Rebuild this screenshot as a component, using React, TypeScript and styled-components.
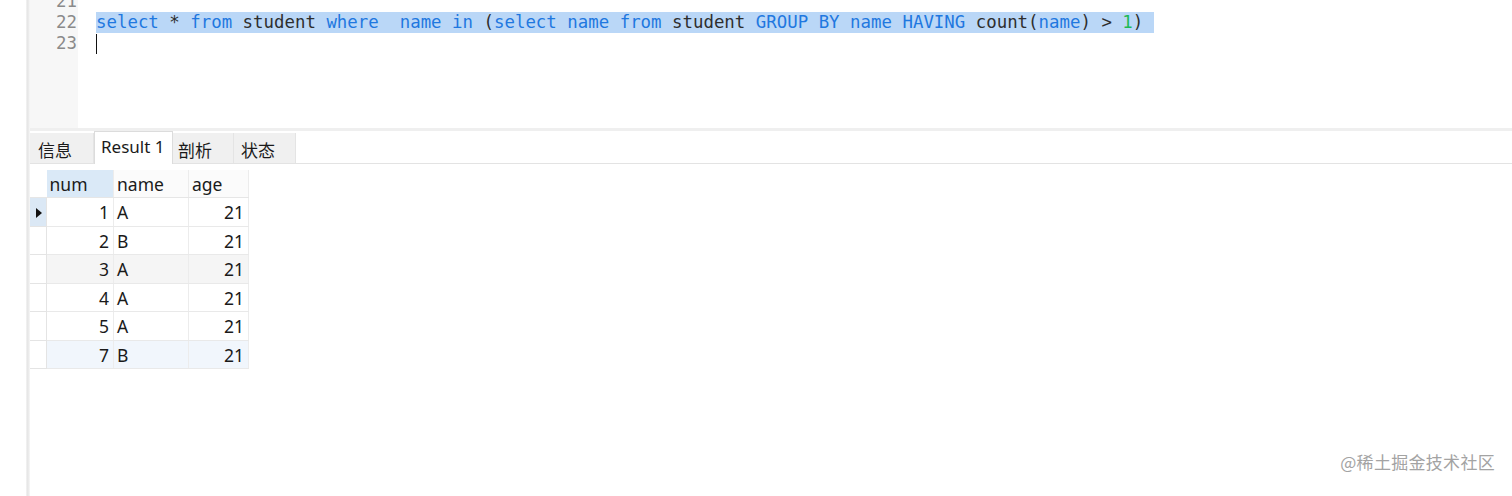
import React from "react";
import styled, { createGlobalStyle } from "styled-components";

const Global = createGlobalStyle`
  html, body { margin: 0; padding: 0; background: #ffffff; }
  body { width: 1512px; height: 496px; overflow: hidden; font-family: "Noto Sans", "Noto Sans CJK SC", sans-serif; }
`;

const Page = styled.div`
  display: flex;
  width: 1512px;
  height: 496px;
  background: #fff;
  position: relative;
`;

const LeftStrip = styled.div`
  width: 26px;
  flex: none;
  background: #fff;
`;

const Divider = styled.div`
  width: 4px;
  flex: none;
  background: linear-gradient(to right, #f4f4f4, #e6e6e6 40%, #ededed 70%, #f8f8f8);
`;

const Main = styled.div`
  flex: 1;
  display: flex;
  flex-direction: column;
  min-width: 0;
`;

const Editor = styled.div`
  height: 128px;
  display: flex;
  overflow: hidden;
  flex: none;
`;

const Gutter = styled.div`
  width: 48px;
  background: #f7f7f7;
  flex: none;
  display: flex;
  flex-direction: column;
  align-items: flex-end;
  padding-right: 1px;
  box-sizing: border-box;
  margin-top: -9px;
`;

const Mono = `
  font-family: "DejaVu Sans Mono", "Liberation Mono", monospace;
  font-size: 17.4px;
  line-height: 21px;
  height: 21px;
  white-space: pre;
`;

const LineNo = styled.div`
  ${Mono};
  color: #8a8a8a;
`;

const Code = styled.div`
  flex: 1;
  padding-left: 18px;
  display: flex;
  flex-direction: column;
  margin-top: -9px;
`;

const Line = styled.div`
  ${Mono};
  color: #2e2e2e;
  display: flex;
  position: relative;
`;

const Sel = styled.span`
  background: #bad7f7;
`;

const Kw = styled.span`
  color: #1f78e0;
`;

const Num = styled.span`
  color: #1db954;
`;

const Caret = styled.span`
  display: inline-block;
  width: 1px;
  height: 20px;
  background: #111;
  margin-top: 1px;
`;

const Sep = styled.div`
  height: 3px;
  background: #efefef;
  flex: none;
`;

const TabBar = styled.div`
  height: 33px;
  display: flex;
  align-items: flex-end;
  border-bottom: 1px solid #e3e3e3;
  flex: none;
  box-sizing: border-box;
`;

const Tab = styled.div<{ $w: number; $active?: boolean; $pl: number }>`
  width: ${(p) => p.$w}px;
  height: ${(p) => (p.$active ? 33 : 30)}px;
  box-sizing: border-box;
  padding-left: ${(p) => p.$pl}px;
  display: flex;
  align-items: center;
  font-family: "Noto Sans", "Noto Sans CJK SC", sans-serif;
  font-size: 17px;
  color: #1a1a1a;
  background: ${(p) => (p.$active ? "#ffffff" : "#f0f0f0")};
  border-right: 1px solid ${(p) => (p.$active ? "#dcdcdc" : "#e4e4e4")};
  border-left: ${(p) => (p.$active ? "1px solid #dcdcdc" : "none")};
  border-top: ${(p) => (p.$active ? "1px solid #dcdcdc" : "none")};
  margin-bottom: ${(p) => (p.$active ? "-1px" : "0")};
  padding-bottom: ${(p) => (p.$active ? "4px" : "0")};
  padding-top: ${(p) => (p.$active ? "0" : "2px")};
`;

const ResultArea = styled.div`
  flex: 1;
  padding-top: 6px;
`;

const Table = styled.table`
  border-collapse: collapse;
  font-family: "Noto Sans", "Noto Sans CJK SC", sans-serif;
  font-size: 17.5px;
  color: #1a1a1a;
  table-layout: fixed;
`;

const Th = styled.th<{ $w: number; $hl?: boolean }>`
  width: ${(p) => p.$w}px;
  height: 27px;
  padding: 1px 3px 0;
  text-align: left;
  font-weight: normal;
  background: ${(p) => (p.$hl ? "#dae9f7" : "#fbfbfb")};
  border-right: 1px solid #ececec;
  border-bottom: 1px solid #e6e6e6;
  box-sizing: border-box;
  line-height: 26px;
`;

const Corner = styled.th`
  width: 16px;
  padding: 0;
  background: #fff;
  border-bottom: 1px solid #e6e6e6;
`;

const Tr = styled.tr<{ $bg: string }>`
  height: 28.5px;
  background: ${(p) => p.$bg};
`;

const Ind = styled.td<{ $sel?: boolean }>`
  width: 16px;
  padding: 0;
  background: ${(p) => (p.$sel ? "#dbe8f5" : "#ffffff")};
  border: 1px solid #e4e4e4;
  border-left: none;
  text-align: center;
  font-size: 11px;
`;

const Td = styled.td<{ $right?: boolean }>`
  padding: 1px 4px 0 3px;
  text-align: ${(p) => (p.$right ? "right" : "left")};
  border-right: 1px solid #ececec;
  border-bottom: 1px solid #e9e9e9;
  line-height: 26px;
  white-space: nowrap;
`;

const Triangle = styled.span`
  display: inline-block;
  width: 0;
  height: 0;
  border-top: 5px solid transparent;
  border-bottom: 5px solid transparent;
  border-left: 6px solid #111;
  vertical-align: middle;
  margin-left: 2px;
`;

const Watermark = styled.div`
  position: absolute;
  right: 17px;
  bottom: 22px;
  font-family: "Noto Sans CJK SC", sans-serif;
  font-size: 17px;
  color: #a3a3a3;
  letter-spacing: 0.3px;
`;

const rows = [
  { n: 1, name: "A", age: 21, bg: "#ffffff", sel: true },
  { n: 2, name: "B", age: 21, bg: "#ffffff" },
  { n: 3, name: "A", age: 21, bg: "#f5f5f5" },
  { n: 4, name: "A", age: 21, bg: "#ffffff" },
  { n: 5, name: "A", age: 21, bg: "#ffffff" },
  { n: 7, name: "B", age: 21, bg: "#f1f6fc" },
];

export default function App() {
  return (
    <>
      <Global />
      <Page>
        <LeftStrip />
        <Divider />
        <Main>
          <Editor>
            <Gutter>
              <LineNo>21</LineNo>
              <LineNo>22</LineNo>
              <LineNo>23</LineNo>
            </Gutter>
            <Code>
              <Line />
              <Line>
                <Sel>
                  <Kw>select</Kw> * <Kw>from</Kw> student <Kw>where</Kw>  <Kw>name</Kw> <Kw>in</Kw> (<Kw>select</Kw>{" "}
                  <Kw>name</Kw> <Kw>from</Kw> student <Kw>GROUP</Kw> <Kw>BY</Kw> <Kw>name</Kw> <Kw>HAVING</Kw> count(
                  <Kw>name</Kw>) &gt; <Num>1</Num>){" "}
                </Sel>
              </Line>
              <Line>
                <Caret />
              </Line>
            </Code>
          </Editor>
          <Sep />
          <TabBar>
            <Tab $w={64} $pl={8}>信息</Tab>
            <Tab $w={79} $pl={6} $active>Result 1</Tab>
            <Tab $w={61} $pl={5}>剖析</Tab>
            <Tab $w={62} $pl={7}>状态</Tab>
          </TabBar>
          <ResultArea>
            <Table>
              <thead>
                <tr>
                  <Corner />
                  <Th $w={67} $hl>num</Th>
                  <Th $w={75}>name</Th>
                  <Th $w={60}>age</Th>
                </tr>
              </thead>
              <tbody>
                {rows.map((r) => (
                  <Tr key={r.n} $bg={r.bg}>
                    <Ind $sel={r.sel}>{r.sel ? <Triangle /> : null}</Ind>
                    <Td $right>{r.n}</Td>
                    <Td>{r.name}</Td>
                    <Td $right>{r.age}</Td>
                  </Tr>
                ))}
              </tbody>
            </Table>
          </ResultArea>
        </Main>
        <Watermark>@稀土掘金技术社区</Watermark>
      </Page>
    </>
  );
}
